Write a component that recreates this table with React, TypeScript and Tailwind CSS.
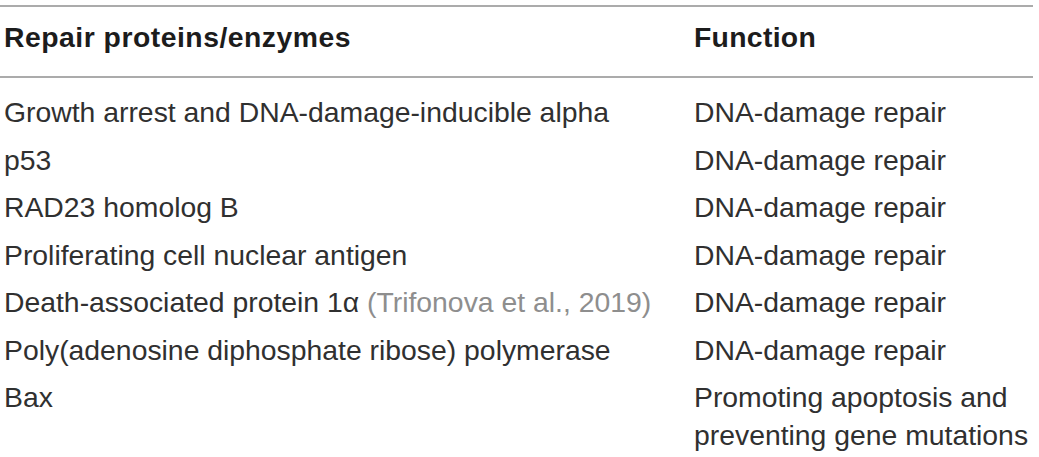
const rows: { name: React.ReactNode; fn: React.ReactNode }[] = [
  { name: 'Growth arrest and DNA-damage-inducible alpha', fn: 'DNA-damage repair' },
  { name: 'p53', fn: 'DNA-damage repair' },
  { name: 'RAD23 homolog B', fn: 'DNA-damage repair' },
  { name: 'Proliferating cell nuclear antigen', fn: 'DNA-damage repair' },
  {
    name: (
      <>
        Death-associated protein 1α <span className="text-[#8e8e8e]">(Trifonova et al., 2019)</span>
      </>
    ),
    fn: 'DNA-damage repair',
  },
  { name: 'Poly(adenosine diphosphate ribose) polymerase', fn: 'DNA-damage repair' },
  {
    name: 'Bax',
    fn: (
      <>
        Promoting apoptosis and
        <br />
        preventing gene mutations
      </>
    ),
  },
];

export default function App() {
  return (
    <div className="w-[1039px] h-[457px] bg-white overflow-hidden pt-[5px] font-['Liberation_Sans',Arial,sans-serif] text-[28.35px] leading-[38px] text-[#303030]">
      <div className="w-[1033px]">
        {/* header */}
        <div className="grid grid-cols-[694px_1fr] border-t-2 border-b-2 border-[#ababab] pt-[11px] pb-[20px] font-bold text-[#1c1c1c]">
          <div className="pl-[4px] tracking-[0.5px]">Repair proteins/enzymes</div>
          <div className="tracking-[0.3px]">Function</div>
        </div>

        {/* body */}
        <div className="flex flex-col gap-[9.5px] pt-[15px]">
          {rows.map((r, i) => (
            <div key={i} className="grid grid-cols-[694px_1fr]">
              <div className="pl-[4px]">{r.name}</div>
              <div>{r.fn}</div>
            </div>
          ))}
        </div>
      </div>
    </div>
  );
}
